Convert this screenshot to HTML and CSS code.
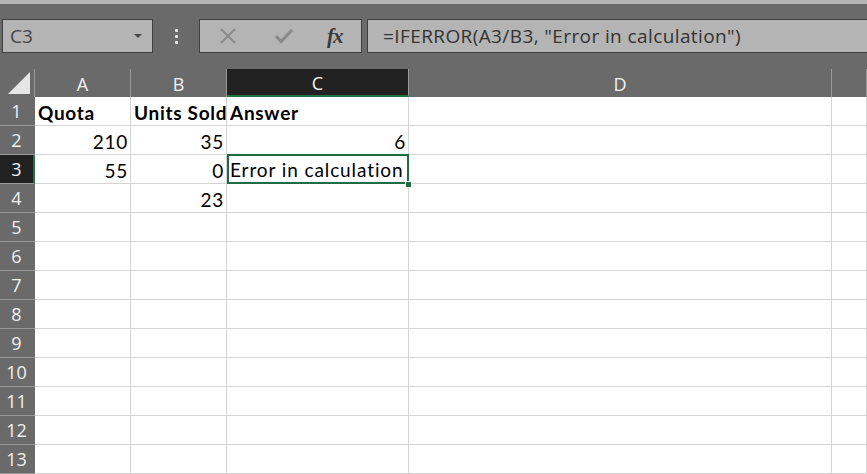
FILE: index.html
```html
<!DOCTYPE html>
<html>
<head>
<meta charset="utf-8">
<link rel="stylesheet" href="styles.css">
</head>
<body>
<div class="app">
  <div class="titlestrip"></div>
  <div class="toolbar">
    <div class="namebox">
      <span class="nb-text">C3</span>
      <svg class="nb-arrow" width="10" height="6" viewBox="0 0 10 6"><path d="M1 1 L9 1 L5 5 Z" fill="#4a4a4a"/></svg>
    </div>
    <div class="grip">
      <span class="dot"></span><span class="dot"></span><span class="dot"></span>
    </div>
    <div class="fxbox">
      <svg class="ico" width="18" height="18" viewBox="0 0 18 18"><path d="M2 2 L16 16 M16 2 L2 16" stroke="#8a8a8a" stroke-width="2" fill="none"/></svg>
      <svg class="ico" width="20" height="18" viewBox="0 0 20 18"><path d="M2 9 L7 14.5 L18 3" stroke="#8a8a8a" stroke-width="3.2" fill="none" stroke-linejoin="miter"/></svg>
      <span class="fx">fx</span>
    </div>
    <div class="formula">=IFERROR(A3/B3, "Error in calculation")</div>
  </div>
  <div class="grid">
    <div class="corner"><svg width="22" height="22" viewBox="0 0 22 22"><path d="M22 0 L22 22 L0 22 Z" fill="#e6e6e6"/></svg></div>
    <div class="ch">A</div>
    <div class="ch">B</div>
    <div class="ch sel">C</div>
    <div class="ch">D</div>
    <div class="ch last"></div>

    <div class="rh">1</div>
    <div class="c b">Quota</div><div class="c b">Units Sold</div><div class="c b">Answer</div><div class="c"></div><div class="c"></div>

    <div class="rh">2</div>
    <div class="c n">210</div><div class="c n">35</div><div class="c n">6</div><div class="c"></div><div class="c"></div>

    <div class="rh selr">3</div>
    <div class="c n">55</div><div class="c n">0</div><div class="c active">Error in calculation<span class="handle"></span></div><div class="c"></div><div class="c"></div>

    <div class="rh">4</div>
    <div class="c"></div><div class="c n">23</div><div class="c"></div><div class="c"></div><div class="c"></div>

    <div class="rh">5</div><div class="c"></div><div class="c"></div><div class="c"></div><div class="c"></div><div class="c"></div>
    <div class="rh">6</div><div class="c"></div><div class="c"></div><div class="c"></div><div class="c"></div><div class="c"></div>
    <div class="rh">7</div><div class="c"></div><div class="c"></div><div class="c"></div><div class="c"></div><div class="c"></div>
    <div class="rh">8</div><div class="c"></div><div class="c"></div><div class="c"></div><div class="c"></div><div class="c"></div>
    <div class="rh">9</div><div class="c"></div><div class="c"></div><div class="c"></div><div class="c"></div><div class="c"></div>
    <div class="rh">10</div><div class="c"></div><div class="c"></div><div class="c"></div><div class="c"></div><div class="c"></div>
    <div class="rh">11</div><div class="c"></div><div class="c"></div><div class="c"></div><div class="c"></div><div class="c"></div>
    <div class="rh">12</div><div class="c"></div><div class="c"></div><div class="c"></div><div class="c"></div><div class="c"></div>
    <div class="rh">13</div><div class="c"></div><div class="c"></div><div class="c"></div><div class="c"></div><div class="c"></div>
  </div>
</div>
</body>
</html>
```
FILE: styles.css
```css
html, body {
  margin: 0;
  padding: 0;
  background: #ffffff;
  overflow: hidden;
}
.app {
  width: 867px;
  height: 474px;
  overflow: hidden;
  font-family: "Open Sans", "Liberation Sans", sans-serif;
}
.titlestrip {
  height: 4px;
  background: #b4b4b4;
}
.toolbar {
  height: 65px;
  background: #6a6a6a;
  display: flex;
  align-items: flex-start;
  padding: 15px 0 0 2px;
  box-sizing: border-box;
}
.namebox {
  width: 151px;
  height: 34px;
  box-sizing: border-box;
  background: #b4b4b4;
  border: 1px solid #404040;
  display: flex;
  align-items: center;
  justify-content: space-between;
  padding: 0 9px 0 7px;
}
.nb-text {
  font-size: 19px;
  color: #454545;
}
.nb-arrow {
  display: block;
}
.grip {
  width: 46px;
  height: 34px;
  display: flex;
  flex-direction: column;
  align-items: center;
  justify-content: center;
  gap: 3px;
}
.dot {
  width: 3px;
  height: 3px;
  background: #e8e8e8;
  border-radius: 1px;
}
.fxbox {
  width: 163px;
  height: 34px;
  box-sizing: border-box;
  background: #b4b4b4;
  border: 1px solid #404040;
  display: flex;
  align-items: center;
  padding: 0 0 0 19px;
  gap: 0;
}
.fxbox .ico:first-child {
  margin-right: 37px;
}
.fx {
  margin-left: 33px;
  font-family: "Liberation Serif", "DejaVu Serif", serif;
  font-style: italic;
  font-weight: bold;
  font-size: 21px;
  color: #3a3a3a;
  letter-spacing: -1px;
}
.formula {
  margin-left: 5px;
  flex: 1;
  height: 34px;
  box-sizing: border-box;
  background: #b4b4b4;
  border: 1px solid #404040;
  border-right: none;
  font-size: 19px;
  letter-spacing: 0.4px;
  color: #333333;
  line-height: 32px;
  padding-left: 15px;
  white-space: nowrap;
}
.grid {
  display: grid;
  grid-template-columns: 35px 96px 96px 182px 423px 35px;
  grid-template-rows: 28px repeat(13, 29px);
}
.corner {
  background: #6a6a6a;
  border-right: 1px solid #9a9a9a;
  box-sizing: border-box;
  display: flex;
  align-items: flex-end;
  justify-content: flex-end;
  padding: 0 4px 3px 0;
}
.corner svg { display: block; }
.ch {
  background: #6a6a6a;
  border-right: 1px solid #9a9a9a;
  box-sizing: border-box;
  color: #f2f2f2;
  font-size: 18px;
  text-align: center;
  line-height: 30px;
}
.ch.sel {
  background: #212121;
  border-bottom: 2px solid #217346;
  line-height: 28px;
}
.rh {
  background: #6a6a6a;
  border-bottom: 1px solid #9a9a9a;
  box-sizing: border-box;
  color: #f0f0f0;
  font-size: 18px;
  text-align: center;
  line-height: 28px;
  padding-right: 2px;
}
.rh.selr {
  background: #212121;
  border-right: 2px solid #217346;
  padding-right: 0;
}
.c {
  border-right: 1px solid #d4d4d4;
  border-bottom: 1px solid #d4d4d4;
  box-sizing: border-box;
  font-family: "Lato", "Open Sans", sans-serif;
  font-size: 19px;
  letter-spacing: 0.7px;
  color: #000000;
  line-height: 31px;
  padding: 0 3px 0 3px;
  white-space: nowrap;
}
.c.b { font-weight: bold; }
.c.n { text-align: right; padding-right: 2px; }
.c.active {
  position: relative;
  border: none;
  box-shadow: inset 0 0 0 2px #1f6b43;
  margin: -1px 0 0 0;
  height: 30px;
  line-height: 31px;
  letter-spacing: 0.9px;
}
.handle {
  position: absolute;
  right: -3px;
  bottom: -4px;
  width: 7px;
  height: 7px;
  background: #1f6b43;
  border: 1px solid #ffffff;
  box-sizing: border-box;
}
```
